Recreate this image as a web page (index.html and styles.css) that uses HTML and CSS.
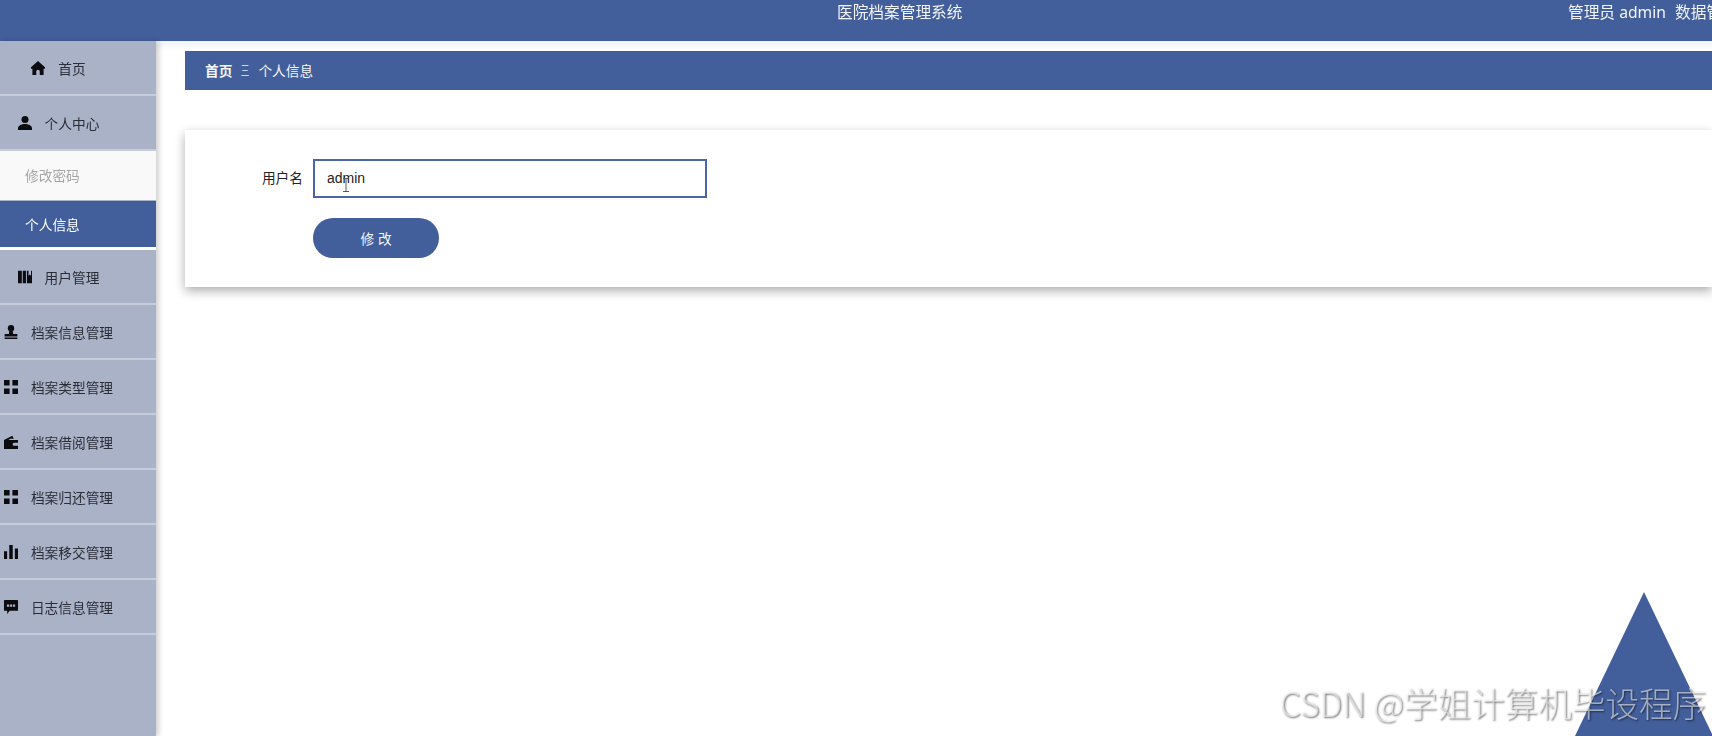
FILE: index.html
```html
<!DOCTYPE html>
<html lang="zh-CN">
<head>
<meta charset="utf-8">
<title>医院档案管理系统</title>
<link rel="stylesheet" href="styles.css">
</head>
<body>
<header class="topbar">
  <div class="title">医院档案管理系统</div>
  <div class="user"><span>管理员 admin</span><span>数据管理</span></div>
</header>
<div class="main">
  <nav class="sidebar">
    <a class="item"><svg class="icon" viewBox="2 2 20 20"><path d="M12 2 2 11v2h2v9h5.500v-5a2.500 2.500 0 0 1 5 0v5H20v-9h2v-2z"/></svg><span>首页</span></a>
    <a class="item"><svg class="icon" viewBox="1 1 22 22"><circle cx="12" cy="6.500" r="5.500"/><path d="M1 23v-3c0-4 6-6.500 11-6.500S23 16 23 20v3z"/></svg><span>个人中心</span></a>
    <a class="sub">修改密码</a>
    <a class="sub active">个人信息</a>
    <a class="item"><svg class="icon" viewBox="1 2 22 20"><path d="M1 2h6v20H1zM8.500 2h5v20h-5zM15 2h2.500v8l2-2 2 2V2H23v20h-8z"/></svg><span>用户管理</span></a>
    <a class="item"><svg class="icon" viewBox="2 1 20 22"><circle cx="12" cy="6" r="5"/><path d="M9.500 10h5l1 5H22v4H2v-4h6.500zM2 20.500h20V23H2z"/></svg><span>档案信息管理</span></a>
    <a class="item"><svg class="icon" viewBox="2 2 20 20"><path d="M2 2h8v8H2zM14 2h8v8h-8zM2 14h8v8H2zM14 14h8v8h-8z"/></svg><span>档案类型管理</span></a>
    <a class="item"><svg class="icon" viewBox="1 1 22 22"><path d="M1 9 14 2l2.500 5H11L8 9h15v4h-6a2.500 2.500 0 0 0 0 5h6v5H1z"/></svg><span>档案借阅管理</span></a>
    <a class="item"><svg class="icon" viewBox="2 2 20 20"><path d="M2 2h8v8H2zM14 2h8v8h-8zM2 14h8v8H2zM14 14h8v8h-8z"/></svg><span>档案归还管理</span></a>
    <a class="item"><svg class="icon" viewBox="2 2 20 20"><path d="M2 11h4.500v11H2zM9.500 2h5v20h-5zM17.500 7H22v15h-4.500z"/></svg><span>档案移交管理</span></a>
    <a class="item"><svg class="icon" viewBox="1 1 22 22"><path d="M2 1h20a1 1 0 0 1 1 1v15a1 1 0 0 1-1 1H10l-4 5v-5H2a1 1 0 0 1-1-1V2a1 1 0 0 1 1-1zM5.500 8v3.500H9V8zM10.250 8v3.500h3.500V8zM15 8v3.500h3.500V8z" fill-rule="evenodd"/></svg><span>日志信息管理</span></a>
  </nav>
  <main class="content">
    <div class="crumb"><b>首页</b><span class="sep">三</span><span>个人信息</span></div>
    <form class="card">
      <div class="row">
        <label class="label">用户名</label>
        <div class="field">
          <input class="input" type="text" value="admin">
          <svg class="cursor" viewBox="0 0 8 14"><path d="M1 .5h6M4 .5v13M1 13.500h6"/></svg>
        </div>
      </div>
      <div class="actions"><button class="btn" type="button">修 改</button></div>
    </form>
  </main>
</div>
<div class="triangle"></div>
<div class="watermark">CSDN @学姐计算机毕设程序</div>
</body>
</html>
```
FILE: styles.css
```css
* { box-sizing: border-box; }
html, body { margin: 0; height: 100%; }
body {
  width: 1712px;
  height: 736px;
  overflow: hidden;
  position: relative;
  background: #fff;
  color: #222;
  font-family: "Liberation Sans", "Noto Sans CJK SC", sans-serif;
  font-size: 13.7px;
}
.topbar {
  height: 41px;
  background: #425e9b;
  color: #f2f4f8;
  display: flex;
  white-space: nowrap;
  overflow: hidden;
  padding: 3px 0 0 837px;
  font-family: "Noto Sans", "Noto Sans CJK SC", sans-serif;
  font-size: 15.7px;
  line-height: 19px;
  filter: blur(.3px);
}
.title { width: 731px; flex: none; }
.user { display: flex; gap: 9px; flex: none; }
.main { display: flex; height: 695px; filter: blur(.3px); }
.sidebar {
  width: 156px;
  flex: none;
  background: #a9b2c7;
  box-shadow: 3px 0 5px rgba(0, 0, 0, .18);
  position: relative;
}
.item {
  height: 55px;
  display: flex;
  align-items: center;
  justify-content: center;
  gap: 13px;
  padding-right: 39px;
  border-bottom: 2px solid #c6ccdb;
  color: #2a2d36;
}
.icon { width: 14px; height: 14px; fill: #0c0c10; flex: none; }
.sub {
  display: flex;
  align-items: center;
  height: 50px;
  padding-left: 25px;
  padding-bottom: 2px;
  background: #f9f9f9;
  color: #a6a6a6;
  border-bottom: 1px solid #a9b2c7;
}
.sub.active {
  height: 49px;
  background: #425e9b;
  color: #fff;
  border-bottom: 3px solid #fff;
  padding-bottom: 0;
}
.content {
  flex: 1;
  min-width: 0;
  padding: 10px 0 0 29px;
  background: linear-gradient(#eef5fc, #fff 10px) no-repeat;
}
.crumb {
  height: 39px;
  background: #425e9b;
  color: #f4f6fa;
  display: flex;
  align-items: center;
  gap: 8px;
  padding: 0 0 2px 20px;
}
.crumb b { font-weight: 700; }
.sep {
  width: 10px;
  font-size: 13px;
  color: #cfd6e6;
  display: flex;
  justify-content: center;
  transform: scaleX(.65);
}
.card {
  margin-top: 40px;
  height: 157px;
  background: #fff;
  box-shadow: 0 4px 10px rgba(0, 0, 0, .32);
  padding: 29px 0 0 0;
}
.row { display: flex; align-items: center; }
.label { width: 118px; text-align: right; color: #222; padding-bottom: 3px; }
.field { margin-left: 10px; position: relative; display: flex; }
.input {
  width: 394px;
  height: 39px;
  border: 2px solid #4a66a4;
  background: #fff;
  padding: 0 12px 1px;
  font: 14px "Liberation Sans", sans-serif;
  color: #222;
  outline: none;
}
.cursor {
  position: absolute;
  left: 29px;
  top: 19px;
  width: 8px;
  height: 14px;
  fill: none;
  stroke: #555;
  stroke-width: 1;
}
.actions { margin: 20px 0 0 128px; }
.btn {
  display: block;
  width: 126px;
  height: 40px;
  border: 0;
  border-radius: 20px;
  background: #425e9b;
  color: #f4f6fa;
  font: 13.7px "Liberation Sans", "Noto Sans CJK SC", sans-serif;
  padding-bottom: 2px;
}
.triangle {
  position: absolute;
  left: 1575px;
  top: 592px;
  width: 138px;
  height: 144px;
  background: #425e9b;
  clip-path: polygon(50% 0, 100% 100%, 0 100%);
}
.watermark {
  position: absolute;
  left: 1280px;
  top: 682px;
  font-size: 33.6px;
  line-height: 42px;
  white-space: nowrap;
  font-family: "Noto Sans CJK SC", sans-serif;
  font-weight: 300;
  color: rgba(255, 255, 255, .55);
  text-shadow: 1px 1px 2px rgba(0, 0, 0, .55);
}
```
